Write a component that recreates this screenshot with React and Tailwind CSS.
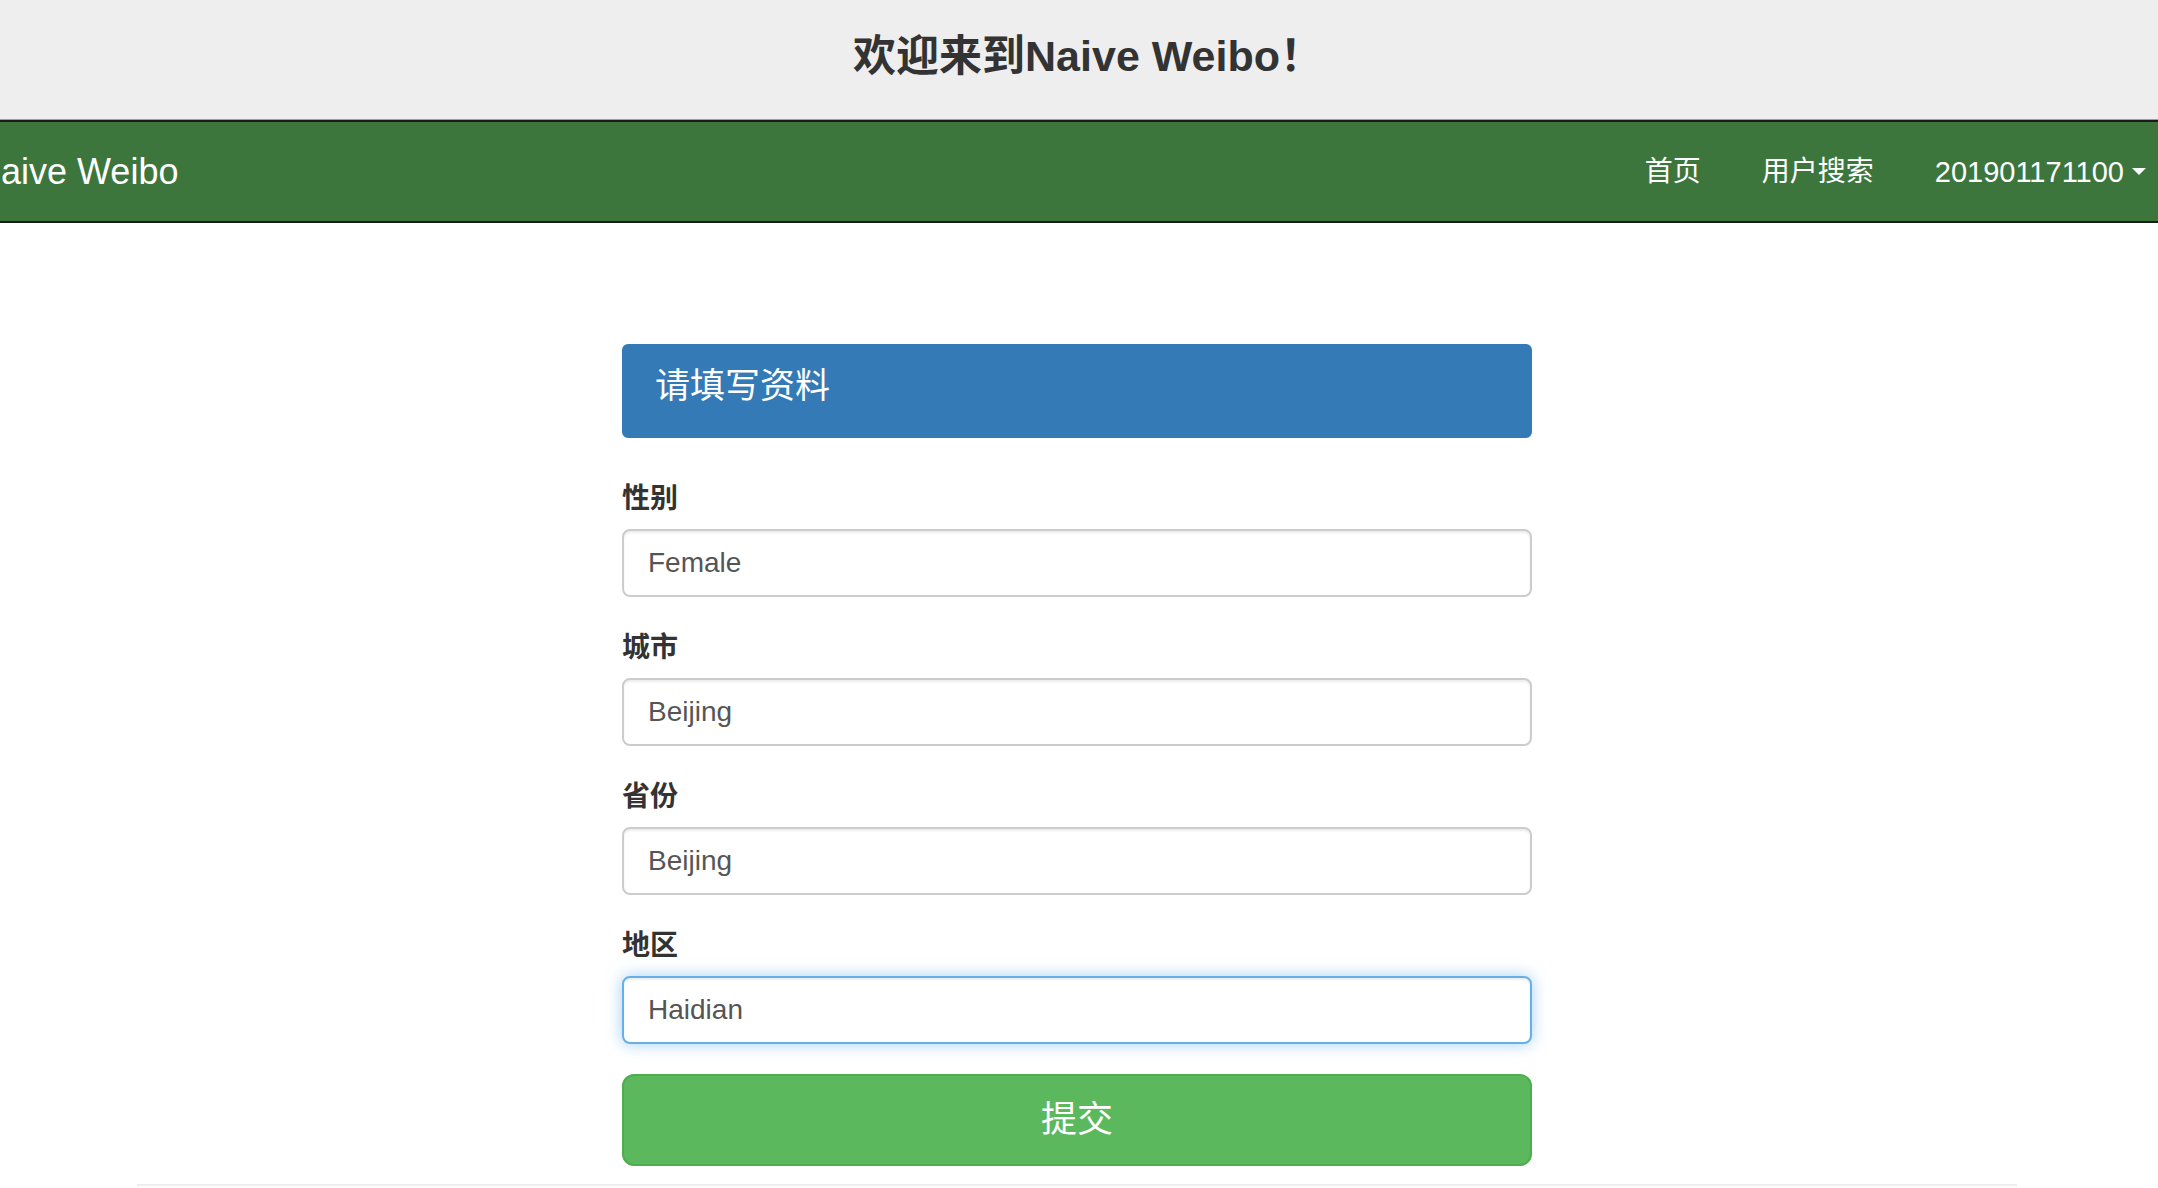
import React from "react";

function Field({ label, value, focused }) {
  return (
    <div className="mb-[31px]">
      <label className="block text-[28px] leading-[40px] font-bold text-[#333333] mb-[10px]">
        {label}
      </label>
      <input
        type="text"
        defaultValue={value}
        className={
          focused
            ? "block w-full h-[68px] px-[24px] text-[28px] text-[#555555] bg-white rounded-[8px] border-2 border-[#66afe9] outline-none shadow-[inset_0_2px_2px_rgba(0,0,0,0.075),0_0_16px_rgba(102,175,233,0.6)]"
            : "block w-full h-[68px] px-[24px] text-[28px] text-[#555555] bg-white rounded-[8px] border-2 border-[#cccccc] outline-none shadow-[inset_0_2px_2px_rgba(0,0,0,0.075)]"
        }
      />
    </div>
  );
}

export default function App() {
  return (
    <div className="min-h-screen bg-white font-['Liberation_Sans','Noto_Sans_CJK_SC',sans-serif] overflow-hidden">
      <header className="h-[120px] bg-[#eeeeee] border-b border-[#9c9c9c] pt-[31px] pl-[18px] text-center">
        <h1 className="text-[43px] leading-[50px] font-bold text-[#333333]">
          欢迎来到Naive Weibo！
        </h1>
      </header>

      <nav className="h-[103px] bg-[#3c763d] border-y-2 border-[#1b1b1b] flex items-center justify-between text-white">
        <div className="ml-[-25px] text-[36px] leading-[40px] whitespace-nowrap">Naive Weibo</div>
        <ul className="flex items-center gap-[61px] mr-[12px] text-[28px] leading-[40px]">
          <li>首页</li>
          <li>用户搜索</li>
          <li className="flex items-center text-[29px]">
            <span>201901171100</span>
            <span className="ml-[8px] w-0 h-0 border-t-[7px] border-t-white border-x-[7.5px] border-x-transparent"></span>
          </li>
        </ul>
      </nav>

      <main className="pr-[4px]">
        <div className="w-[910px] mx-auto mt-[121px]">
          <div className="h-[94px] bg-[#337ab7] border-2 border-[#337ab7] rounded-[6px] pl-[31px] pt-[20px] text-white text-[35px] leading-[40px]">
            请填写资料
          </div>
          <form className="mt-[41px]" onSubmit={(e) => e.preventDefault()}>
            <Field label="性别" value="Female" />
            <Field label="城市" value="Beijing" />
            <Field label="省份" value="Beijing" />
            <Field label="地区" value="Haidian" focused />
            <button
              type="submit"
              className="block w-full h-[92px] -mt-[1px] bg-[#5cb85c] border-2 border-[#4cae4c] rounded-[12px] text-white text-[36px] leading-[48px]"
            >
              提交
            </button>
          </form>
        </div>
        <div className="w-[1880px] mx-auto mt-[18px] border-t-2 border-[#eeeeee]"></div>
      </main>
    </div>
  );
}
